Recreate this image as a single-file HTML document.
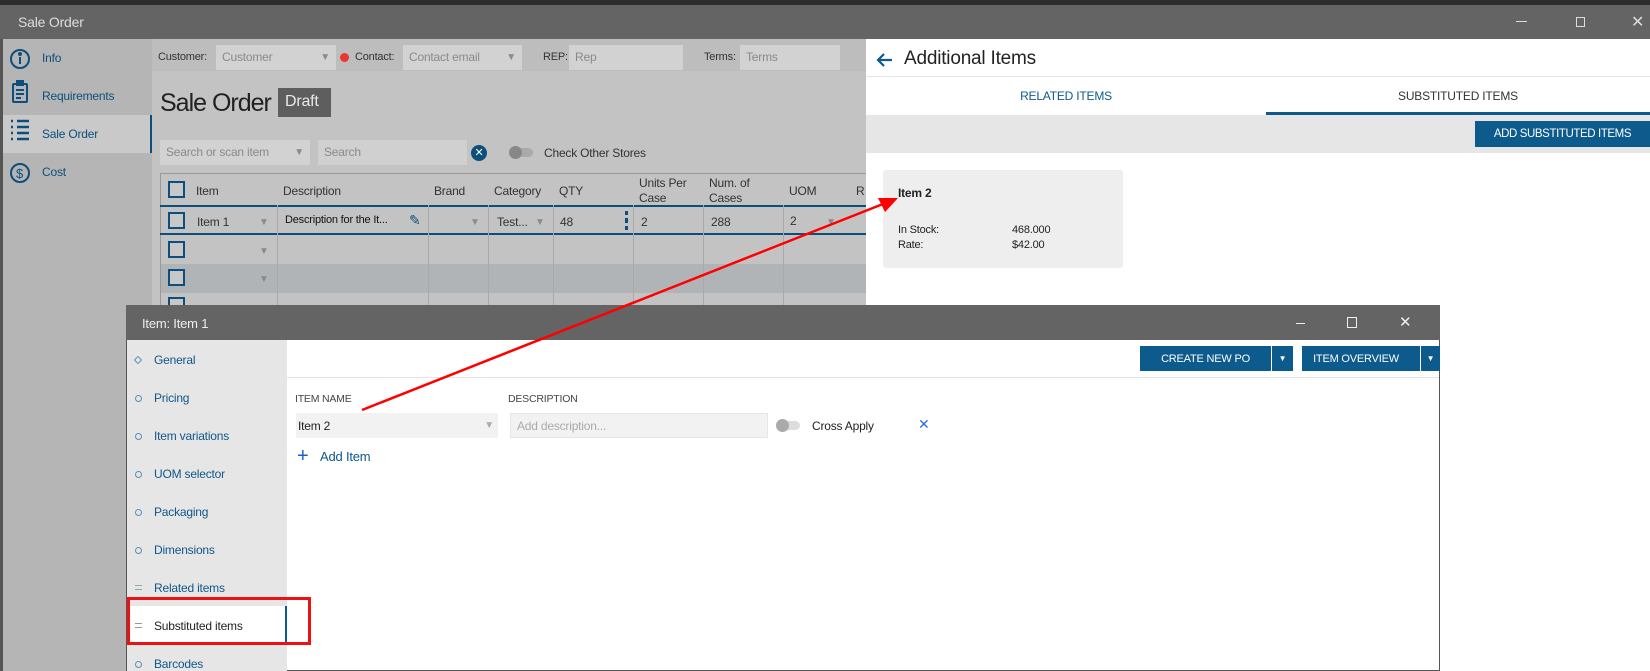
<!DOCTYPE html>
<html><head><meta charset="utf-8"><style>
*{box-sizing:border-box;margin:0;padding:0;white-space:nowrap}
body{width:1650px;height:671px;overflow:hidden;position:relative;font-family:"Liberation Sans",sans-serif;font-size:12px;background:#c3c3c3;color:#222;letter-spacing:-0.2px}
.a{position:absolute}
.inp{position:absolute;background:#d2d2d2;color:#8a8a8a;font-size:12px;padding:5px 6px;height:25px}
.lbl{position:absolute;font-size:12px;color:#333}
.nav{position:absolute;left:42px;color:#0d4f7c;font-size:12px}
.dn{position:absolute;left:154px;color:#10578a;font-size:12px}
.dot{position:absolute;left:135px;width:7px;height:7px;border:1.5px solid #5a8fb5;border-radius:50%}
.cb{position:absolute;left:168px;width:17px;height:17px;border:2px solid #0d4f7c;background:#c8c8c8}
.tri{color:#8a8a8a;font-size:10px;position:absolute}
</style></head><body>
<div class="a" style="left:0;top:0;width:1650px;height:5px;background:#2c2c2c"></div>
<div class="a" style="left:0;top:5px;width:1650px;height:34px;background:#646464"></div>
<div class="a" style="left:18px;top:14px;color:#ddd;font-size:14px">Sale Order</div>
<div class="a" style="left:1516px;top:21px;width:11px;height:1px;background:#ddd"></div>
<div class="a" style="left:1576px;top:17px;width:9px;height:10px;border:1px solid #ddd"></div>
<div class="a" style="left:1631px;top:12px;color:#ddd;font-size:16px">✕</div>
<div class="a" style="left:0;top:39px;width:152px;height:632px;background:#b5b5b5;border-left:3px solid #555"></div>
<div class="a" style="left:3px;top:115px;width:149px;height:38px;background:#c9c9c9;border-right:2px solid #0d4f7c"></div>
<svg class="a" style="left:9px;top:47px" width="22" height="140" viewBox="0 0 22 140" fill="none" stroke="#0d4f7c" stroke-width="2">
<circle cx="11" cy="12" r="9"/><line x1="11" y1="10" x2="11" y2="17"/><circle cx="11" cy="7" r="1" fill="#0d4f7c"/>
<rect x="4" y="37" width="14" height="18" rx="1"/><rect x="8" y="34" width="6" height="4" fill="#0d4f7c"/><line x1="7" y1="43" x2="15" y2="43"/><line x1="7" y1="47" x2="15" y2="47"/><line x1="7" y1="51" x2="12" y2="51"/>
<g stroke-width="2.5"><line x1="2" y1="74" x2="4" y2="74"/><line x1="8" y1="74" x2="20" y2="74"/><line x1="2" y1="80" x2="4" y2="80"/><line x1="8" y1="80" x2="20" y2="80"/><line x1="2" y1="86" x2="4" y2="86"/><line x1="8" y1="86" x2="20" y2="86"/><line x1="2" y1="92" x2="4" y2="92"/><line x1="8" y1="92" x2="20" y2="92"/></g>
<circle cx="11" cy="126" r="9"/><text x="7" y="131" font-size="13" fill="#0d4f7c" stroke="none" font-family="Liberation Sans">$</text>
</svg>
<div class="nav" style="top:51px">Info</div>
<div class="nav" style="top:89px">Requirements</div>
<div class="nav" style="top:127px">Sale Order</div>
<div class="nav" style="top:165px">Cost</div>
<div class="a" style="left:152px;top:39px;width:714px;height:32px;background:#bdbdbd"></div>
<div class="lbl" style="left:158px;top:51px;font-size:11px">Customer:</div>
<div class="inp" style="left:216px;top:45px;width:120px">Customer<span class="tri" style="right:6px;top:7px">▼</span></div>
<div class="a" style="left:340px;top:53px;width:9px;height:9px;border-radius:50%;background:#e33"></div>
<div class="lbl" style="left:355px;top:51px;font-size:11px">Contact:</div>
<div class="inp" style="left:403px;top:45px;width:119px">Contact email<span class="tri" style="right:6px;top:7px">▼</span></div>
<div class="lbl" style="left:543px;top:51px;font-size:11px">REP:</div>
<div class="inp" style="left:569px;top:45px;width:114px">Rep</div>
<div class="lbl" style="left:704px;top:51px;font-size:11px">Terms:</div>
<div class="inp" style="left:740px;top:45px;width:100px">Terms</div>
<div class="a" style="left:160px;top:89px;font-size:25px;color:#222;letter-spacing:-1px">Sale Order</div>
<div class="a" style="left:278px;top:88px;width:53px;height:29px;background:#5e5e5e;color:#e8e8e8;font-size:16px;padding:5px 7px">Draft</div>
<div class="inp" style="left:160px;top:140px;width:150px">Search or scan item<span class="tri" style="right:6px;top:7px">▼</span></div>
<div class="inp" style="left:318px;top:140px;width:149px;background:#d0d0d0">Search</div>
<div class="a" style="left:471px;top:145px;width:16px;height:16px;border-radius:50%;background:#0d4f7c;color:#fff;font-size:11px;text-align:center;line-height:16px">✕</div>
<div class="a" style="left:510px;top:148px;width:23px;height:9px;border-radius:5px;background:#aaa"></div>
<div class="a" style="left:509px;top:146px;width:13px;height:13px;border-radius:50%;background:#888"></div>
<div class="lbl" style="left:544px;top:146px">Check Other Stores</div>
<div class="a" style="left:160px;top:173px;width:706px;height:132px;border-top:1px solid #999;border-left:1px solid #999"></div>
<div class="a" style="left:160px;top:205px;width:706px;height:30px;border-top:2px solid #0d4f7c;border-bottom:2px solid #0d4f7c"></div>
<div class="a" style="left:161px;top:264px;width:705px;height:29px;background:#b1b4b7"></div>
<div class="cb" style="top:181px"></div><div class="cb" style="top:212px"></div><div class="cb" style="top:241px"></div><div class="cb" style="top:269px"></div><div class="cb" style="top:297px"></div>
<div class="a" style="left:277px;top:205px;width:1px;height:100px;background:#aaa"></div>
<div class="a" style="left:428px;top:205px;width:1px;height:100px;background:#aaa"></div>
<div class="a" style="left:488px;top:205px;width:1px;height:100px;background:#aaa"></div>
<div class="a" style="left:553px;top:205px;width:1px;height:100px;background:#aaa"></div>
<div class="a" style="left:633px;top:205px;width:1px;height:100px;background:#aaa"></div>
<div class="a" style="left:703px;top:205px;width:1px;height:100px;background:#aaa"></div>
<div class="a" style="left:783px;top:205px;width:1px;height:100px;background:#aaa"></div>
<div class="lbl" style="left:196px;top:184px">Item</div>
<div class="lbl" style="left:283px;top:184px">Description</div>
<div class="lbl" style="left:434px;top:184px">Brand</div>
<div class="lbl" style="left:494px;top:184px">Category</div>
<div class="lbl" style="left:559px;top:184px">QTY</div>
<div class="lbl" style="left:639px;top:176px;line-height:15px">Units Per<br>Case</div>
<div class="lbl" style="left:709px;top:176px;line-height:15px">Num. of<br>Cases</div>
<div class="lbl" style="left:789px;top:184px">UOM</div>
<div class="lbl" style="left:856px;top:184px">R</div>
<div class="lbl" style="left:197px;top:215px">Item 1</div><span class="tri" style="left:259px;top:217px">▼</span>
<div class="lbl" style="left:285px;top:214px;font-size:11px;color:#111">Description for the It...</div>
<div class="a" style="left:409px;top:212px;color:#0d4f7c;font-size:14px">✎</div>
<span class="tri" style="left:470px;top:217px">▼</span>
<div class="lbl" style="left:497px;top:215px">Test...</div><span class="tri" style="left:535px;top:217px">▼</span>
<div class="lbl" style="left:560px;top:215px">48</div>
<div class="a" style="left:625px;top:211px;width:3px;height:19px;background:linear-gradient(#0d4f7c 4px,transparent 4px,transparent 7px,#0d4f7c 7px,#0d4f7c 12px,transparent 12px,transparent 15px,#0d4f7c 15px)"></div>
<div class="lbl" style="left:641px;top:215px">2</div>
<div class="lbl" style="left:711px;top:215px">288</div>
<div class="lbl" style="left:790px;top:214px">2</div><span class="tri" style="left:826px;top:217px">▼</span>
<span class="tri" style="left:259px;top:246px">▼</span><span class="tri" style="left:259px;top:274px">▼</span>
<div class="a" style="left:866px;top:39px;width:784px;height:632px;background:#fff"></div>
<svg class="a" style="left:876px;top:52px" width="18" height="16" viewBox="0 0 18 16"><path d="M16 8H3M8 2L2 8l6 6" stroke="#0d5a8c" stroke-width="2.2" fill="none"/></svg>
<div class="a" style="left:904px;top:48px;font-size:19px;color:#222">Additional Items</div>
<div class="a" style="left:866px;top:76px;width:784px;height:1px;background:#e6e6e6"></div>
<div class="a" style="left:866px;top:89px;width:400px;text-align:center;color:#0d5a8c;font-size:12px">RELATED ITEMS</div>
<div class="a" style="left:1266px;top:89px;width:384px;text-align:center;color:#333;font-size:12px">SUBSTITUTED ITEMS</div>
<div class="a" style="left:1266px;top:112px;width:384px;height:3px;background:#0d5a8c"></div>
<div class="a" style="left:866px;top:115px;width:784px;height:38px;background:#e6e6e6"></div>
<div class="a" style="left:1475px;top:121px;width:175px;height:26px;background:#0d5a8c;color:#fff;font-size:11.5px;padding:7px 0 0 0;text-align:center;letter-spacing:-0.4px">ADD SUBSTITUTED ITEMS</div>
<div class="a" style="left:883px;top:170px;width:240px;height:98px;background:#eee;border-radius:3px"></div>
<div class="a" style="left:898px;top:186px;font-weight:bold;font-size:12px">Item 2</div>
<div class="a" style="left:898px;top:224px;font-size:11px">In Stock:</div><div class="a" style="left:1012px;top:224px;font-size:11px">468.000</div>
<div class="a" style="left:898px;top:239px;font-size:11px">Rate:</div><div class="a" style="left:1012px;top:239px;font-size:11px">$42.00</div>
<div class="a" style="left:126px;top:305px;width:1314px;height:366px;background:#fff;border:1px solid #555"></div>
<div class="a" style="left:126px;top:305px;width:1314px;height:35px;background:#646464"></div>
<div class="a" style="left:142px;top:316px;color:#eee;font-size:13px">Item: Item 1</div>
<div class="a" style="left:1296px;top:323px;width:9px;height:1px;background:#eee"></div>
<div class="a" style="left:1347px;top:317px;width:10px;height:11px;border:1px solid #eee"></div>
<div class="a" style="left:1399px;top:313px;color:#eee;font-size:15px">✕</div>
<div class="a" style="left:127px;top:340px;width:160px;height:331px;background:#e6e6e6"></div>
<div class="a" style="left:127px;top:606px;width:160px;height:39px;background:#fff;border-right:2px solid #0d5a8c"></div>
<div class="a" style="left:127px;top:597px;width:184px;height:48px;border:3px solid #e11"></div>
<div class="dot" style="top:357px;transform:rotate(45deg);border-radius:1px;width:6px;height:6px"></div><div class="dn" style="top:353px">General</div>
<div class="dot" style="top:395px"></div><div class="dn" style="top:391px">Pricing</div>
<div class="dot" style="top:433px"></div><div class="dn" style="top:429px">Item variations</div>
<div class="dot" style="top:471px"></div><div class="dn" style="top:467px">UOM selector</div>
<div class="dot" style="top:509px"></div><div class="dn" style="top:505px">Packaging</div>
<div class="dot" style="top:547px"></div><div class="dn" style="top:543px">Dimensions</div>
<div class="a" style="left:135px;top:585px;width:7px;height:5px;border-top:1px solid #8aa;border-bottom:1px solid #8aa"></div><div class="dn" style="top:581px">Related items</div>
<div class="a" style="left:135px;top:623px;width:7px;height:5px;border-top:1px solid #999;border-bottom:1px solid #999"></div><div class="dn" style="top:619px;color:#222">Substituted items</div>
<div class="dot" style="top:661px"></div><div class="dn" style="top:657px">Barcodes</div>
<div class="a" style="left:287px;top:377px;width:1152px;height:1px;background:#e4e4e4"></div>
<div class="a" style="left:1140px;top:346px;width:131px;height:25px;background:#0d5a8c;color:#fff;font-size:11px;padding:7px 0 0 0;text-align:center">CREATE NEW PO</div>
<div class="a" style="left:1272px;top:346px;width:21px;height:25px;background:#0d5a8c;color:#fff;font-size:8px;text-align:center;line-height:25px">▼</div>
<div class="a" style="left:1292px;top:346px;width:128px;height:25px;background:#0d5a8c;color:#fff;font-size:11px;padding:7px 0 0 0;text-align:center">ITEM OVERVIEW</div>
<div class="a" style="left:1421px;top:346px;width:19px;height:25px;background:#0d5a8c;color:#fff;font-size:8px;text-align:center;line-height:25px">▼</div>
<div class="a" style="left:1271px;top:346px;width:1px;height:25px;background:#fff"></div>
<div class="a" style="left:1420px;top:346px;width:1px;height:25px;background:#fff"></div>
<div class="a" style="left:1293px;top:346px;width:9px;height:25px;background:#fff"></div>
<div class="a" style="left:295px;top:393px;font-size:10.5px;color:#444">ITEM NAME</div>
<div class="a" style="left:508px;top:393px;font-size:10.5px;color:#444">DESCRIPTION</div>
<div class="a" style="left:296px;top:413px;width:202px;height:25px;background:#f2f2f2;font-size:12px;padding:6px 2px">Item 2<span class="tri" style="right:4px;top:7px;color:#aaa">▼</span></div>
<div class="a" style="left:510px;top:413px;width:258px;height:25px;background:#f2f2f2;border:1px solid #e6e6e6;font-size:12px;padding:5px 6px;color:#aaa">Add description...</div>
<div class="a" style="left:777px;top:421px;width:23px;height:9px;border-radius:5px;background:#ddd"></div>
<div class="a" style="left:776px;top:419px;width:13px;height:13px;border-radius:50%;background:#aaa"></div>
<div class="a" style="left:812px;top:419px;font-size:12px">Cross Apply</div>
<div class="a" style="left:918px;top:416px;color:#2b6be0;font-size:14px">✕</div>
<div class="a" style="left:297px;top:446px;color:#1a5fd0;font-size:20px;line-height:20px">+</div>
<div class="a" style="left:320px;top:449px;color:#0d5a8c;font-size:13px">Add Item</div>
<svg class="a" style="left:0;top:0" width="1650" height="671"><line x1="362" y1="410" x2="888" y2="202" stroke="#f00" stroke-width="2.5"/><path d="M898 198L878 198L885 212Z" fill="#f00"/></svg>
</body></html>
